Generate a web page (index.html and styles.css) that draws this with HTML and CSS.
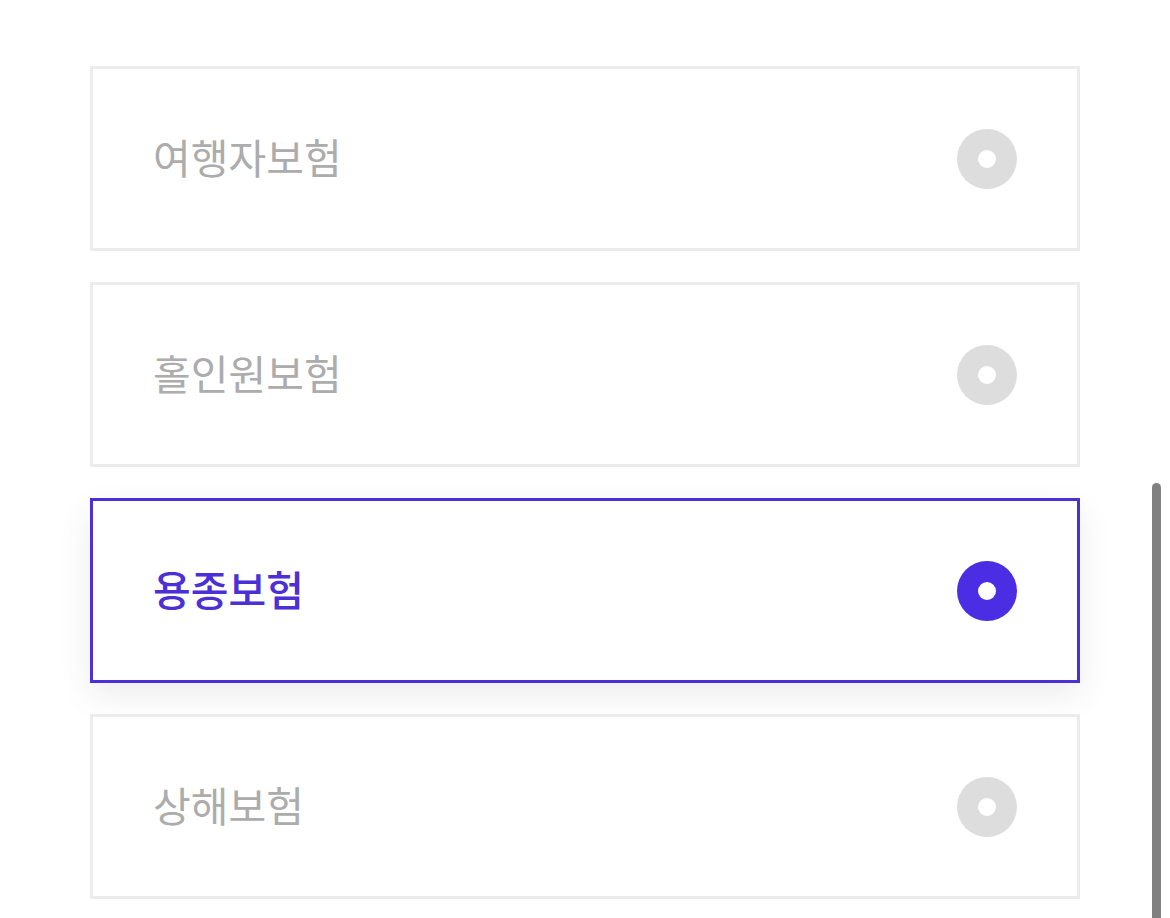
FILE: index.html
```html
<!DOCTYPE html>
<html lang="ko">
<head>
  <meta charset="UTF-8">
  <meta name="viewport" content="width=device-width, initial-scale=1.0">
  <title>보험 선택</title>
  <link rel="stylesheet" href="styles.css">
</head>
<body>
  <div class="container">
    <ul class="option-list">
      <li class="option">
        <span class="option-label">여행자보험</span>
        <span class="radio"></span>
      </li>
      <li class="option">
        <span class="option-label">홀인원보험</span>
        <span class="radio"></span>
      </li>
      <li class="option selected">
        <span class="option-label">용종보험</span>
        <span class="radio"></span>
      </li>
      <li class="option">
        <span class="option-label">상해보험</span>
        <span class="radio"></span>
      </li>
    </ul>
  </div>

  <!-- fake scrollbar thumb -->
  <div class="scroll-thumb"></div>
</body>
</html>
```

FILE: styles.css
```css
* {
  margin: 0;
  padding: 0;
  box-sizing: border-box;
}

body {
  font-family: "Noto Sans CJK KR", "Noto Sans", sans-serif;
  background-color: #fff;
  overflow: hidden;
  height: 918px;
}

.container {
  padding: 66px 0 0 90px;
}

.option-list {
  list-style: none;
  width: 990px;
  display: flex;
  flex-direction: column;
  gap: 31px;
}

.option {
  height: 185px;
  border: 3px solid #ececec;
  background-color: #fff;
  display: flex;
  align-items: center;
  justify-content: space-between;
  padding: 0 60px;
}

.option-label {
  font-size: 41px;
  font-weight: 400;
  line-height: 1;
  color: #acacac;
  margin-top: -4px;
}

.radio {
  width: 60px;
  height: 60px;
  border-radius: 50%;
  background-color: #dddddd;
  display: flex;
  align-items: center;
  justify-content: center;
}

.radio::after {
  content: "";
  width: 18px;
  height: 18px;
  border-radius: 50%;
  background-color: #fff;
}

/* selected card */
.option.selected {
  border-color: #4a30d6;
  box-shadow: 0 12px 32px rgba(0, 0, 0, 0.08);
}

.option.selected .option-label {
  color: #4a30d6;
  font-weight: 500;
}

.option.selected .radio {
  background-color: #4b2de3;
}

.scroll-thumb {
  position: fixed;
  left: 1152px;
  top: 483px;
  width: 9px;
  height: 450px;
  border-radius: 5px;
  background-color: #808080;
}
```
